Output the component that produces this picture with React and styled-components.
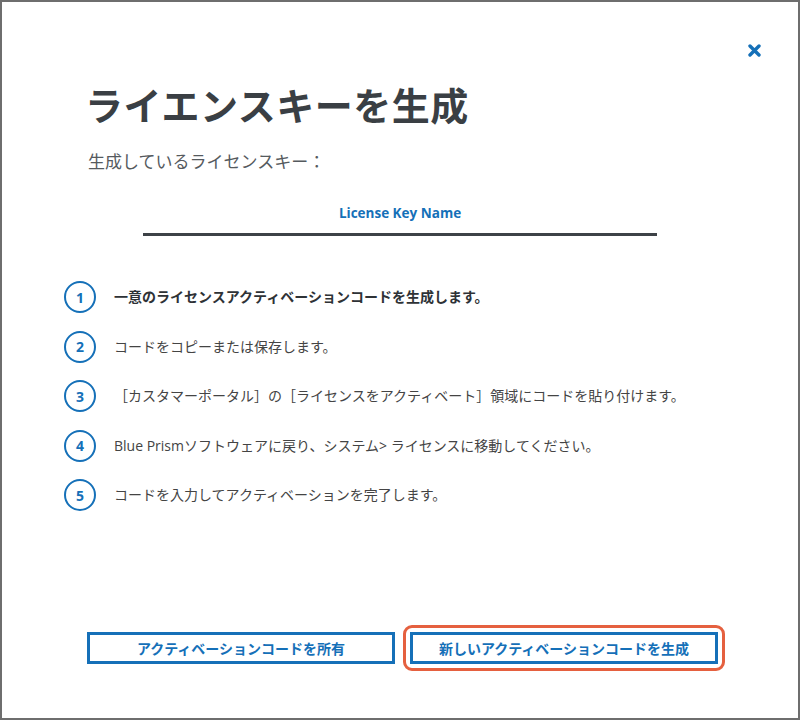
import React from 'react'
import styled, { createGlobalStyle } from 'styled-components'

const GlobalStyle = createGlobalStyle`
  html, body {
    margin: 0;
    padding: 0;
    background: #fff;
  }

  body {
    font-family: 'Open Sans', 'Noto Sans CJK JP', sans-serif;
    color: #3b3b3b;
  }
`

const BLUE = '#1570b8'

const steps = [
  { text: '一意のライセンスアクティベーションコードを生成します。', strong: true },
  { text: 'コードをコピーまたは保存します。' },
  { text: '［カスタマーポータル］の［ライセンスをアクティベート］領域にコードを貼り付けます。' },
  { text: 'Blue Prismソフトウェアに戻り、システム> ライセンスに移動してください。' },
  { text: 'コードを入力してアクティベーションを完了します。' }
]

const CloseIcon = () => (
  <svg width='13' height='13' viewBox='0 0 13 13' aria-hidden='true'>
    <path d='M2 2 L11 11 M11 2 L2 11' stroke={BLUE} strokeWidth='3.4' strokeLinecap='round' />
  </svg>
)

const App = () => (
  <>
    <GlobalStyle />
    <Dialog>
      <TopBar>
        <CloseButton aria-label='閉じる'>
          <CloseIcon />
        </CloseButton>
      </TopBar>

      <Title>ライエンスキーを生成</Title>
      <Subtitle>生成しているライセンスキー：</Subtitle>

      <KeyName>License Key Name</KeyName>
      <Rule />

      <Steps>
        {steps.map((step, i) => (
          <Step key={i}>
            <Badge>{i + 1}</Badge>
            <StepText strong={step.strong}>{step.text}</StepText>
          </Step>
        ))}
      </Steps>

      <Footer>
        <Button>アクティベーションコードを所有</Button>
        <FocusRing>
          <Button>新しいアクティベーションコードを生成</Button>
        </FocusRing>
      </Footer>
    </Dialog>
  </>
)

const Dialog = styled.div`
  display: flex;
  flex-direction: column;
  box-sizing: border-box;
  width: 800px;
  height: 720px;
  border: 2px solid #6e6e6e;
  background: #fff;
`

const TopBar = styled.div`
  display: flex;
  justify-content: flex-end;
  align-items: flex-start;
  box-sizing: border-box;
  height: 79px;
  padding: 42px 37px 0 0;
`

const CloseButton = styled.button`
  display: flex;
  padding: 0;
  border: 0;
  background: none;
  cursor: pointer;
`

const Title = styled.h1`
  margin: 0;
  padding-left: 83px;
  font-family: 'Noto Sans CJK JP', sans-serif;
  font-size: 38px;
  font-weight: 700;
  line-height: 46px;
  letter-spacing: 0.5px;
  color: #3a3f44;
`

const Subtitle = styled.p`
  margin: 22px 0 0;
  padding-left: 86px;
  font-family: 'Noto Sans CJK JP', sans-serif;
  font-size: 17px;
  line-height: 24px;
  color: #555a5e;
`

const KeyName = styled.div`
  margin-top: 30px;
  text-align: center;
  font-size: 13.5px;
  font-weight: 700;
  line-height: 20px;
  color: ${BLUE};
`

const Rule = styled.hr`
  width: 514px;
  margin: 10px auto 0;
  border: 0;
  height: 3px;
  background: #3d4247;
`

const Steps = styled.ol`
  display: flex;
  flex-direction: column;
  gap: 17.5px;
  margin: 45px 0 0;
  padding: 0 0 0 62px;
  list-style: none;
`

const Step = styled.li`
  display: flex;
  align-items: center;
  gap: 18px;
`

const Badge = styled.span`
  display: flex;
  align-items: center;
  justify-content: center;
  flex: none;
  box-sizing: border-box;
  width: 32px;
  height: 32px;
  border: 2px solid ${BLUE};
  border-radius: 50%;
  font-size: 14px;
  font-weight: 700;
  color: ${BLUE};
`

const StepText = styled.span`
  font-size: 14px;
  line-height: 20px;
  font-weight: ${p => (p.strong ? 700 : 400)};
  color: ${p => (p.strong ? '#2e3236' : '#444')};
`

const Footer = styled.div`
  display: flex;
  align-items: center;
  gap: 8px;
  margin-top: auto;
  padding: 0 0 47px 85px;
`

const Button = styled.button`
  box-sizing: border-box;
  width: 308px;
  height: 32px;
  padding: 0;
  border: 3px solid ${BLUE};
  background: #fff;
  font-family: 'Noto Sans CJK JP', sans-serif;
  font-size: 14px;
  font-weight: 700;
  color: ${BLUE};
  cursor: pointer;
`

const FocusRing = styled.div`
  display: flex;
  padding: 4px;
  border: 3px solid #e5603f;
  border-radius: 9px;
`

export default App
